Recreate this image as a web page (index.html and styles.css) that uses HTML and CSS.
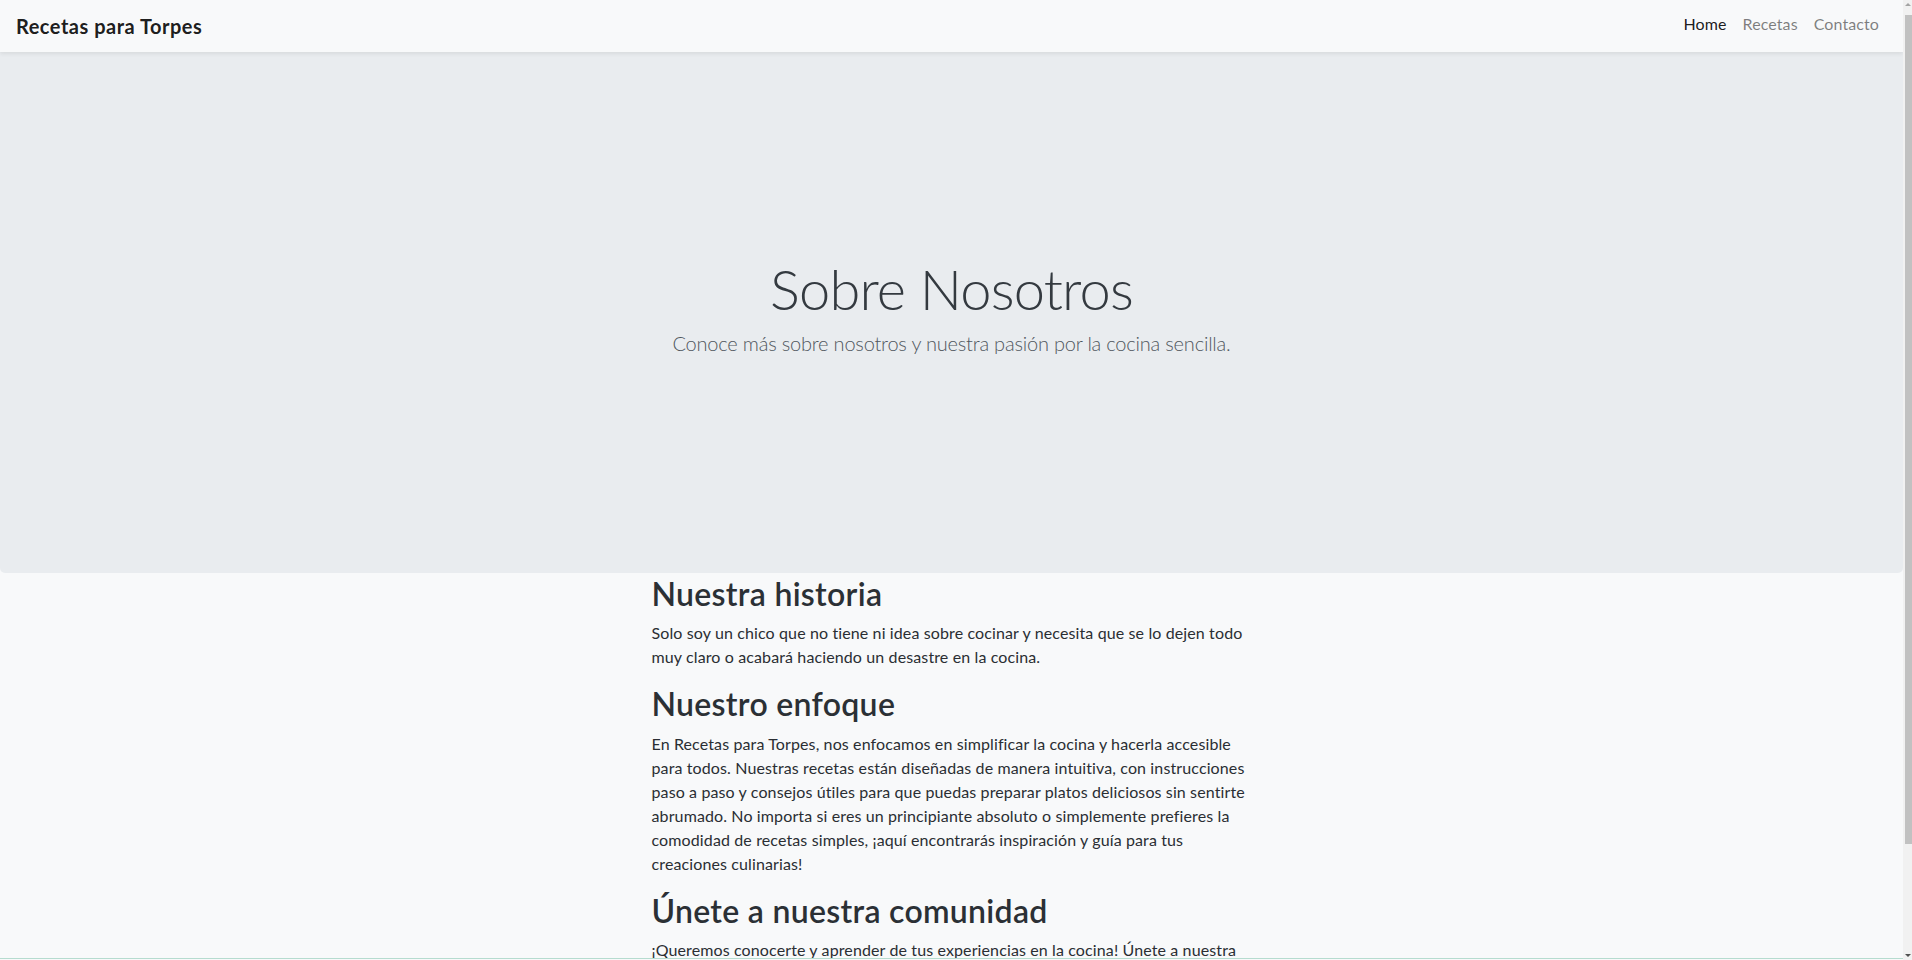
FILE: index.html
```html
<!DOCTYPE html>
<html lang="es">
<head>
<meta charset="utf-8">
<title>Sobre Nosotros - Recetas para Torpes</title>
<link rel="stylesheet" href="styles.css">
</head>
<body>
<nav class="navbar">
  <a class="brand" href="#">Recetas para Torpes</a>
  <ul class="nav-links">
    <li><a class="nav-link active" href="#">Home</a></li>
    <li><a class="nav-link" href="#">Recetas</a></li>
    <li><a class="nav-link" href="#">Contacto</a></li>
  </ul>
</nav>
<header class="jumbotron">
  <h1 class="display">Sobre Nosotros</h1>
  <p class="lead">Conoce más sobre nosotros y nuestra pasión por la cocina sencilla.</p>
</header>
<main class="content">
  <h2>Nuestra historia</h2>
  <p>Solo soy un chico que no tiene ni idea sobre cocinar y necesita que se lo dejen todo muy claro o acabará haciendo un desastre en la cocina.</p>
  <h2>Nuestro enfoque</h2>
  <p>En Recetas para Torpes, nos enfocamos en simplificar la cocina y hacerla accesible para todos. Nuestras recetas están diseñadas de manera intuitiva, con instrucciones paso a paso y consejos útiles para que puedas preparar platos deliciosos sin sentirte abrumado. No importa si eres un principiante absoluto o simplemente prefieres la comodidad de recetas simples, ¡aquí encontrarás inspiración y guía para tus creaciones culinarias!</p>
  <h2>Únete a nuestra comunidad</h2>
  <p>¡Queremos conocerte y aprender de tus experiencias en la cocina! Únete a nuestra comunidad y comparte con nosotros tus recetas, dudas y consejos.</p>
</main>
<div class="scrollbar" aria-hidden="true">
  <span class="sb-arrow sb-up"></span>
  <span class="sb-thumb"></span>
  <span class="sb-arrow sb-down"></span>
</div>
<div class="window-edge" aria-hidden="true"></div>
</body>
</html>
```
FILE: styles.css
```css
html {
  background: #f8f9fa;
}
body {
  margin: 0 9px 0 0;
  background: #f8f9fa;
  color: #212529;
  font-family: "Segoe UI", Lato, "Noto Sans", sans-serif;
  font-size: 16px;
  line-height: 1.5;
}
a {
  text-decoration: none;
}
.navbar {
  position: relative;
  z-index: 2;
  height: 52px;
  padding: 0 16px;
  display: flex;
  align-items: center;
  justify-content: space-between;
  background: #f8f9fa;
  box-shadow: 0 2px 4px rgba(0, 0, 0, 0.075);
}
.brand {
  font-size: 20px;
  line-height: 30px;
  font-weight: 700;
  letter-spacing: 0.5px;
  color: rgba(0, 0, 0, 0.9);
}
.nav-links {
  display: flex;
  list-style: none;
  margin: 0;
  padding: 0;
}
.nav-link {
  display: block;
  padding: 5px 8px 9px;
  line-height: 24px;
  letter-spacing: 0.1px;
  color: rgba(0, 0, 0, 0.5);
}
.nav-link.active {
  color: rgba(0, 0, 0, 0.9);
}
.jumbotron {
  height: 521px;
  box-sizing: border-box;
  padding-bottom: 12px;
  display: flex;
  flex-direction: column;
  align-items: center;
  justify-content: center;
  background: #e9ecef;
  border-radius: 0 0 5px 5px;
}
.display {
  margin: 0 0 6px;
  font-size: 56px;
  font-weight: 300;
  line-height: 1.2;
  letter-spacing: -0.8px;
  color: #343a40;
}
.lead {
  margin: 0;
  font-size: 20px;
  font-weight: 300;
  line-height: 30px;
  letter-spacing: -0.2px;
  color: #50575e;
}
.content {
  max-width: 600px;
  margin: 0 auto;
  padding: 2px 0 76px;
}
.content h2 {
  margin: 0 0 8px;
  font-size: 32px;
  font-weight: 600;
  line-height: 1.2;
  letter-spacing: 0.3px;
  color: #2b3035;
}
.content p {
  margin: 0 0 16px;
  letter-spacing: 0.12px;
  color: #2a2e33;
}
.content p + h2 {
  margin-top: 1px;
}
.scrollbar {
  position: fixed;
  top: 0;
  right: 0;
  width: 9px;
  height: 100vh;
  background: #f1f1f1;
  display: flex;
  flex-direction: column;
  align-items: flex-end;
}
.sb-arrow {
  width: 9px;
  height: 15px;
  position: relative;
}
.sb-arrow::after {
  content: "";
  position: absolute;
  left: 2px;
  border-left: 3px solid transparent;
  border-right: 3px solid transparent;
}
.sb-up::after {
  top: 3px;
  border-bottom: 3px solid #a3a3a3;
}
.sb-down {
  margin-top: auto;
}
.sb-down::after {
  bottom: 3px;
  border-top: 3px solid #505050;
}
.sb-thumb {
  width: 7px;
  height: 829px;
  background: #c1c1c1;
}
.window-edge {
  position: fixed;
  left: 0;
  right: 9px;
  bottom: 1px;
  height: 1px;
  background: #b6dccf;
}
```
